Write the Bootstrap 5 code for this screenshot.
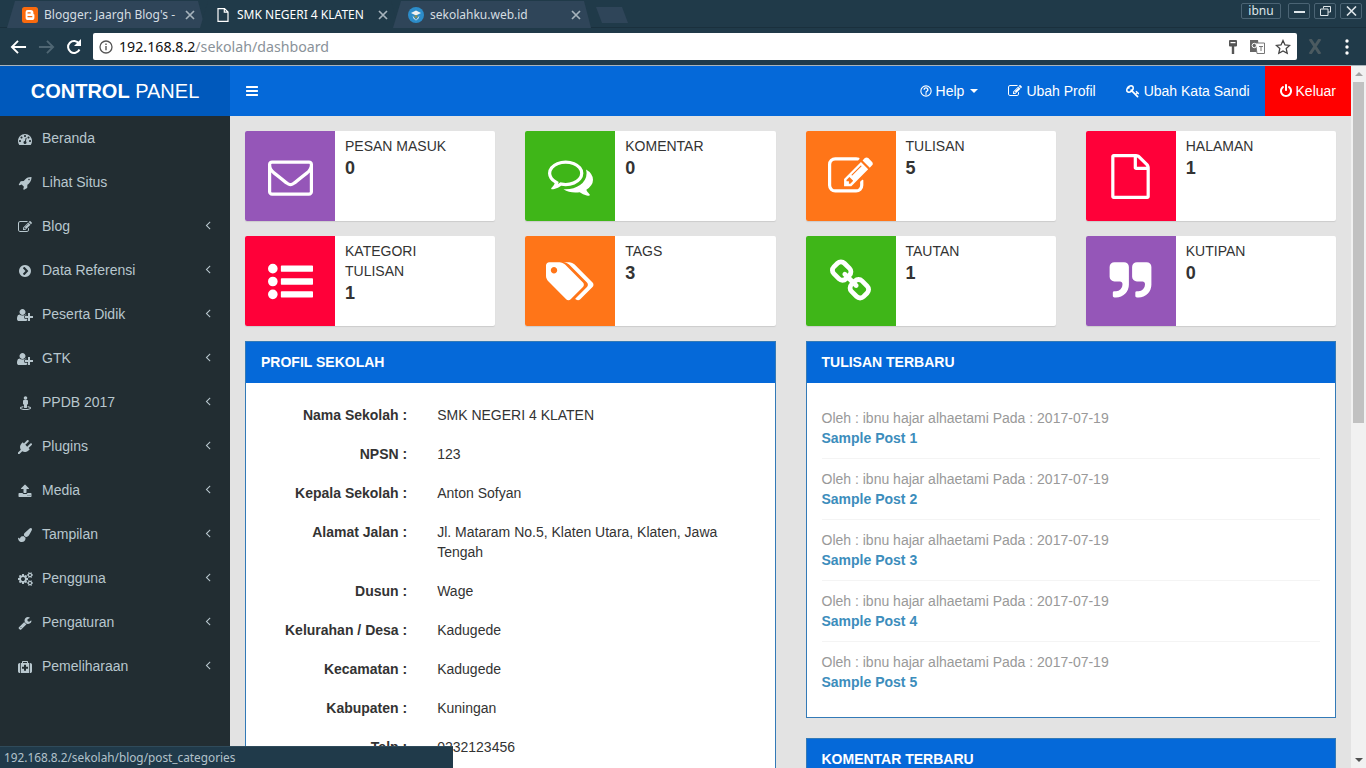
<!DOCTYPE html>
<html lang="id">
<head>
<meta charset="utf-8">
<title>SMK NEGERI 4 KLATEN</title>
<link rel="stylesheet" href="https://cdn.jsdelivr.net/npm/bootstrap@5.3.0/dist/css/bootstrap.min.css">
<style>
html,body{height:768px;overflow:hidden}
body{font-family:"Liberation Sans",Arial,sans-serif;font-size:14px;line-height:20px;color:#333;background:#e3e3e3}
svg.ic{fill:currentColor;flex:none;display:inline-block}
.shell{height:768px}
.chrome-ui{background:#203a49;font-family:"Noto Sans",sans-serif;color:#d5dde2;height:66px;flex:none;border-bottom:1px solid #a9b4bb}
.tabstrip{height:28px;padding:1px 0 0 7px;border-bottom:1px solid #1a303d}
.btab{width:198px;height:27px;margin-right:-5px;padding:0 10px 0 15px;font-size:12px;background:#2f4559;clip-path:polygon(0 100%,8px 0,191px 0,198px 100%)}
.btab.on{background:#203a49;color:#fff}
.btab .ttl{white-space:nowrap;overflow:hidden;flex:1;min-width:0;margin-left:6px}
.btab .cl{color:#a6b3bc}
.newtab{width:32px;height:16px;margin:6px 0 0 10px;background:#2f4559;clip-path:polygon(0 0,26px 0,32px 100%,6px 100%)}
.wbtn{height:16px;border:1px solid #4b6474;border-radius:2px;width:22px;color:#dfe6ea;font-size:13px;line-height:14px}
.wbtn.user{width:40px;margin-right:3px;font-size:12px}
.wctl{margin:2px 4px 0 auto;gap:4px}
.toolbar{height:37px;padding:5px 0 5px 10px;gap:11px}
.omni{height:27px;width:1204px;background:#fff;border-radius:2px;font-size:14.2px;color:#8a9299;padding:0 6px}
.omni b{font-weight:400;color:#111}
.omni .gap-i{margin-right:6px}
.omni .gap-k{margin-left:13px}
.omni .gap-s{margin-left:10px}
.dots{margin-left:12px}
.side{width:230px;background:#222d32;flex:none;color:#b8c7ce}
.brand{height:50px;background:#0059bc;color:#fff;font-size:20px;line-height:50px;text-align:center}
.smenu{padding:0;margin:0;list-style:none}
.smenu a{height:44px;padding:0 15px;color:#b8c7ce;text-decoration:none}
.smenu .slot{width:20px;margin-right:7px}
.smenu a>svg{margin-top:-2px}
.topbar{height:50px;background:#0569d9;padding:0;--bs-navbar-nav-link-padding-x:15px;flex:none}
.topbar .nav-link{color:#fff;padding:15px;font-size:14px;line-height:20px}
.topbar .nav-link.exit{background:#f00}
.caret-dn{width:0;height:0;border-left:4px solid transparent;border-right:4px solid transparent;border-top:4px solid #fff;margin-left:6px;display:inline-block;vertical-align:middle}
.canvas{padding:15px;min-height:0;background:#e3e3e3}
.grid15{--bs-gutter-x:30px;--bs-gutter-y:0}
.ibox{height:90px;margin-bottom:15px;border:0;border-radius:2px;box-shadow:0 1px 1px rgba(0,0,0,.1);overflow:hidden;flex-direction:row}
.ibox-i{width:90px;flex:none;color:#fff}
.ibox-t{padding:5px 10px;min-width:0}
.ibox-l{display:block;text-transform:uppercase;color:#333}
.ibox-n{display:block;font-weight:700;font-size:18px;line-height:24px;color:#333}
.c-pur{background:#9556b8}.c-grn{background:#3fb618}.c-org{background:#ff7518}.c-red{background:#ff0039}
.pnl{border:1px solid #337ab7;border-radius:0;margin-bottom:20px;background:#fff}
.pnl-h{height:41px;background:#0569d9;color:#fff;font-weight:700;padding:0 15px;line-height:40px;margin:0;font-size:14px;border-radius:0;border:0}
.pnl-b{padding:22px 0 0}
.frow{margin:0 0 5px;--bs-gutter-x:30px;padding-bottom:14px}
.frow .lbl{font-weight:700;text-align:right}
.plist{padding:15px 15px 15px;list-style:none;margin:0}
.plist li{padding:10px 0;border-bottom:1px solid #f4f4f4}
.plist li:last-child{border-bottom:0}
.plist span{display:block;color:#999}
.plist a{display:block;color:#3c8dbc;font-weight:700;text-decoration:none}
.sbar{width:15px;flex:none;background:#f1f1f1;padding:0 2px}
.sb-up,.sb-dn{width:0;height:0;border-left:4px solid transparent;border-right:4px solid transparent;margin:0 auto}
.sb-up{border-bottom:4px solid #a3a3a3;margin-top:6px;margin-bottom:6px}
.sb-dn{border-top:4px solid #505050;margin-top:auto;margin-bottom:6px}
.sb-th{height:341px;background:#c1c1c1;width:11px}
.statusb{position:absolute;left:0;bottom:0;width:453px;height:22px;background:#203a4a;color:#b3c2cb;font-family:"Noto Sans",sans-serif;font-size:11.8px;line-height:21px;padding-left:4px;border-top:1px solid #2f4a5a;z-index:5;white-space:nowrap}
</style>
</head>
<body>
<svg width="0" height="0" class="position-absolute" aria-hidden="true"><defs>
<symbol id="envelope" viewBox="0 0 1792 1792"><path d="M1664 1504v-768q-32 36-69 66-268 206-426 338-51 43-83 67t-86.5 48.5-102.5 24.5h-2q-48 0-102.5-24.5t-86.5-48.5-83-67q-158-132-426-338-37-30-69-66v768q0 13 9.5 22.5t22.5 9.5h1472q13 0 22.5-9.5t9.5-22.5zm0-1051v-24.5l-.5-13-3-12.5-5.5-9-9-7.5-14-2.5h-1472q-13 0-22.5 9.5t-9.5 22.5q0 168 147 284 193 152 401 317 6 5 35 29.5t46 37.5 44.5 31.5 50.5 27.5 43 9h2q20 0 43-9t50.5-27.5 44.5-31.5 46-37.5 35-29.5q208-165 401-317 54-43 100.5-115.5t46.5-131.5zm128-37v1088q0 66-47 113t-113 47h-1472q-66 0-113-47t-47-113v-1088q0-66 47-113t113-47h1472q66 0 113 47t47 113z"/></symbol>
<symbol id="comments" viewBox="0 0 1792 1792"><path d="M704 384q-153 0-286 52t-211.5 141-78.5 191q0 82 53 158t149 132l97 56-35 84q34-20 62-39l44-31 53 10q78 14 153 14 153 0 286-52t211.5-141 78.5-191-78.5-191-211.5-141-286-52zm0-128q191 0 353.5 68.5t256.5 186.5 94 257-94 257-256.5 186.5-353.5 68.5q-86 0-176-16-124 88-278 128-36 9-86 16h-3q-11 0-20.5-8t-11.5-21q-1-3-1-6.5t.5-6.5 2-6l2.5-5 3.5-5.5 4-5 4.5-5 4-4.5q5-6 23-25t26-29.5 22.5-29 25-38.5 20.5-44q-124-72-195-177t-71-224q0-139 94-257t256.5-186.5 353.5-68.5zm822 1169q10 24 20.5 44t25 38.5 22.5 29 26 29.5 23 25q1 1 4 4.5t4.5 5 4 5 3.5 5.5l2.5 5 2 6 .5 6.5-1 6.5q-3 14-13 22t-22 7q-50-7-86-16-154-40-278-128-90 16-176 16-271 0-472-132 58 4 88 4 161 0 309-45t264-129q125-92 192-212t67-254q0-77-23-152 129 71 204 178t75 230q0 120-71 224.5t-195 176.5z"/></symbol>
<symbol id="edit" viewBox="0 0 1792 1792"><path d="M888 1184l116-116-152-152-116 116v56h96v96h56zm440-720q-16-16-33 1l-350 350q-17 17-1 33t33-1l350-350q17-17 1-33zm80 594v190q0 119-84.5 203.5t-203.5 84.5h-832q-119 0-203.5-84.5t-84.5-203.5v-832q0-119 84.5-203.5t203.5-84.5h832q63 0 117 25 15 7 18 23 3 17-9 29l-49 49q-14 14-32 8-23-6-45-6h-832q-66 0-113 47t-47 113v832q0 66 47 113t113 47h832q66 0 113-47t47-113v-126q0-13 9-22l64-64q15-15 35-7t20 29zm-96-738l288 288-672 672h-288v-288zm444 132l-92 92-288-288 92-92q28-28 68-28t68 28l152 152q28 28 28 68t-28 68z"/></symbol>
<symbol id="file" viewBox="0 0 1792 1792"><path d="M1596 380q28 28 48 76t20 88v1152q0 40-28 68t-68 28h-1344q-40 0-68-28t-28-68v-1600q0-40 28-68t68-28h896q40 0 88 20t76 48zm-444-244v376h376q-10-29-22-41l-313-313q-12-12-41-22zm384 1528v-1024h-416q-40 0-68-28t-28-68v-416h-768v1536h1280z"/></symbol>
<symbol id="list" viewBox="0 0 1792 1792"><path d="M384 1408q0 80-56 136t-136 56-136-56-56-136 56-136 136-56 136 56 56 136zm0-512q0 80-56 136t-136 56-136-56-56-136 56-136 136-56 136 56 56 136zm1408 416v192q0 13-9.5 22.5t-22.5 9.5h-1216q-13 0-22.5-9.5t-9.5-22.5v-192q0-13 9.5-22.5t22.5-9.5h1216q13 0 22.5 9.5t9.5 22.5zm-1408-928q0 80-56 136t-136 56-136-56-56-136 56-136 136-56 136 56 56 136zm1408 416v192q0 13-9.5 22.5t-22.5 9.5h-1216q-13 0-22.5-9.5t-9.5-22.5v-192q0-13 9.5-22.5t22.5-9.5h1216q13 0 22.5 9.5t9.5 22.5zm0-512v192q0 13-9.5 22.5t-22.5 9.5h-1216q-13 0-22.5-9.5t-9.5-22.5v-192q0-13 9.5-22.5t22.5-9.5h1216q13 0 22.5 9.5t9.5 22.5z"/></symbol>
<symbol id="tags" viewBox="0 0 1920 1792"><path d="M448 448q0-53-37.5-90.5t-90.5-37.5-90.5 37.5-37.5 90.5 37.5 90.5 90.5 37.5 90.5-37.5 37.5-90.5zm1067 576q0 53-37 90l-491 492q-39 37-91 37-53 0-90-37l-715-716q-38-37-64.5-101t-26.5-117v-416q0-52 38-90t90-38h416q53 0 117 26.5t102 64.5l715 714q37 39 37 91zm384 0q0 53-37 90l-491 492q-39 37-91 37-36 0-59-14t-53-45l470-470q37-37 37-90 0-52-37-91l-715-714q-38-38-102-64.5t-117-26.5h224q53 0 117 26.5t102 64.5l715 714q37 39 37 91z"/></symbol>
<symbol id="chain" viewBox="0 0 1792 1792"><path d="M1520 1216q0-40-28-68l-208-208q-28-28-68-28-42 0-72 32 3 3 19 18.5t21.5 21.5 15 19 13 25.5 3.5 27.5q0 40-28 68t-68 28q-15 0-27.5-3.5t-25.5-13-19-15-21.5-21.5-18.5-19q-33 31-33 73 0 40 28 68l206 207q27 27 68 27 40 0 68-26l147-146q28-28 28-67zm-703-705q0-40-28-68l-206-207q-28-28-68-28-39 0-68 27l-147 146q-28 28-28 67 0 40 28 68l208 208q27 27 68 27 42 0 72-31-3-3-19-18.5t-21.5-21.5-15-19-13-25.5-3.5-27.5q0-40 28-68t68-28q15 0 27.5 3.5t25.5 13 19 15 21.5 21.5 18.5 19q33-31 33-73zm895 705q0 120-85 203l-147 146q-83 83-203 83-121 0-204-85l-206-207q-83-83-83-203 0-123 88-209l-88-88q-86 88-208 88-120 0-204-84l-208-208q-84-84-84-204t85-203l147-146q83-83 203-83 121 0 204 85l206 207q83 83 83 203 0 123-88 209l88 88q86-88 208-88 120 0 204 84l208 208q84 84 84 204z"/></symbol>
<symbol id="quote" viewBox="0 0 1792 1792"><path d="M832 320v704q0 104-40.5 198.5t-109.5 163.5-163.5 109.5-198.5 40.5h-64q-26 0-45-19t-19-45v-128q0-26 19-45t45-19h64q106 0 181-75t75-181v-32q0-40-28-68t-68-28h-224q-80 0-136-56t-56-136v-384q0-80 56-136t136-56h384q80 0 136 56t56 136zm896 0v704q0 104-40.5 198.5t-109.5 163.5-163.5 109.5-198.5 40.5h-64q-26 0-45-19t-19-45v-128q0-26 19-45t45-19h64q106 0 181-75t75-181v-32q0-40-28-68t-68-28h-224q-80 0-136-56t-56-136v-384q0-80 56-136t136-56h384q80 0 136 56t56 136z"/></symbol>
<symbol id="bars" viewBox="0 0 1792 1792"><path d="M1664 1344v128q0 26-19 45t-45 19h-1408q-26 0-45-19t-19-45v-128q0-26 19-45t45-19h1408q26 0 45 19t19 45zm0-512v128q0 26-19 45t-45 19h-1408q-26 0-45-19t-19-45v-128q0-26 19-45t45-19h1408q26 0 45 19t19 45zm0-512v128q0 26-19 45t-45 19h-1408q-26 0-45-19t-19-45v-128q0-26 19-45t45-19h1408q26 0 45 19t19 45z"/></symbol>
<symbol id="key" viewBox="0 0 1792 1792"><path d="M832 512q0-80-56-136t-136-56-136 56-56 136q0 42 19 83-41-19-83-19-80 0-136 56t-56 136 56 136 136 56 136-56 56-136q0-42-19-83 41 19 83 19 80 0 136-56t56-136zm851 704q0 17-49 66t-66 49q-9 0-28.5-16t-36.5-33-38.5-40-24.5-26l-96 96 220 220q28 28 28 68 0 42-39 81t-81 39q-40 0-68-28l-671-671q-176 131-365 131-163 0-265.5-102.5t-102.5-265.5q0-160 95-313t248-248 313-95q163 0 265.5 102.5t102.5 265.5q0 189-131 365l355 355 96-96q-3-3-26-24.5t-40-38.5-33-36.5-16-28.5q0-17 49-66t66-49q13 0 23 10 6 6 46 44.5t82 79.5 86.5 86 73 78 28.5 41z"/></symbol>
<symbol id="gauge" viewBox="0 0 1792 1792"><path d="M384 1152q0-53-37.5-90.5t-90.5-37.5-90.5 37.5-37.5 90.5 37.5 90.5 90.5 37.5 90.5-37.5 37.5-90.5zm192-448q0-53-37.5-90.5t-90.5-37.5-90.5 37.5-37.5 90.5 37.5 90.5 90.5 37.5 90.5-37.5 37.5-90.5zm428 481l101-382q6-26-7.5-48.5t-38.5-29.5-48 6.5-30 39.5l-101 382q-60 5-107 43.5t-63 98.5q-20 77 20 146t117 89 146-20 89-117q16-60-6-117t-72-91zm660-33q0-53-37.5-90.5t-90.5-37.5-90.5 37.5-37.5 90.5 37.5 90.5 90.5 37.5 90.5-37.5 37.5-90.5zm-640-640q0-53-37.5-90.5t-90.5-37.5-90.5 37.5-37.5 90.5 37.5 90.5 90.5 37.5 90.5-37.5 37.5-90.5zm448 192q0-53-37.5-90.5t-90.5-37.5-90.5 37.5-37.5 90.5 37.5 90.5 90.5 37.5 90.5-37.5 37.5-90.5zm320 448q0 261-141 483-19 29-54 29h-1402q-35 0-54-29-141-221-141-483 0-182 71-348t191-286 286-191 348-71 348 71 286 191 191 286 71 348z"/></symbol>
<symbol id="rocket" viewBox="0 0 1792 1792"><path d="M1504 448q0-40-28-68t-68-28-68 28-28 68 28 68 68 28 68-28 28-68zm224-288q0 249-75.5 430.5t-253.5 360.5q-81 80-195 176l-20 379q-2 16-16 26l-384 224q-7 4-16 4-12 0-23-9l-64-64q-13-14-8-32l85-276-281-281-276 85q-3 1-9 1-14 0-23-9l-64-64q-17-19-5-39l224-384q10-14 26-16l379-20q96-114 176-195 188-187 358-258t431-71q14 0 24 9.5t10 22.5z"/></symbol>
<symbol id="chev" viewBox="0 0 1792 1792"><path d="M845 1395l454-454q19-19 19-45t-19-45l-454-454q-19-19-45-19t-45 19l-102 102q-19 19-19 45t19 45l307 307-307 307q-19 19-19 45t19 45l102 102q19 19 45 19t45-19zm819-499q0 209-103 385.5t-279.5 279.5-385.5 103-385.5-103-279.5-279.5-103-385.5 103-385.5 279.5-279.5 385.5-103 385.5 103 279.5 279.5 103 385.5z"/></symbol>
<symbol id="userplus" viewBox="0 0 2048 1792"><path d="M704 896q-159 0-271.5-112.5t-112.5-271.5 112.5-271.5 271.5-112.5 271.5 112.5 112.5 271.5-112.5 271.5-271.5 112.5zm960 128h352q13 0 22.5 9.5t9.5 22.5v192q0 13-9.5 22.5t-22.5 9.5h-352v352q0 13-9.5 22.5t-22.5 9.5h-192q-13 0-22.5-9.5t-9.5-22.5v-352h-352q-13 0-22.5-9.5t-9.5-22.5v-192q0-13 9.5-22.5t22.5-9.5h352v-352q0-13 9.5-22.5t22.5-9.5h192q13 0 22.5 9.5t9.5 22.5v352zm-736 224q0 52 38 90t90 38h256v238q-68 50-171 50h-874q-121 0-194-69t-73-190q0-53 3.5-103.5t14-109 26.5-108.5 43-97.5 62-81 85.5-53.5 111.5-20q19 0 39 17 79 61 154.5 91.5t164.5 30.5 164.5-30.5 154.5-91.5q20-17 39-17 132 0 217 96h-223q-52 0-90 38t-38 90v192z"/></symbol>
<symbol id="street" viewBox="0 0 1408 1792"><path d="M1408 1536q0 63-61.5 113.5t-164 81-225 46-253.5 15.5-253.5-15.5-225-46-164-81-61.5-113.5q0-49 33-88.5t91-66.5 118-44.5 131-29.5q26-5 48 10.5t26 41.5q5 26-10.5 48t-41.5 26q-58 10-106 23.5t-76.5 25.5-48.5 23.5-27.5 19.5-8.5 12q3 11 27 26.5t73 33 114 32.5 160.5 25 201.5 10 201.5-10 160.5-25 114-33 73-33 27-27q-1-4-8.5-11t-27.5-19-48.5-23.5-76.5-25-106-23.5q-26-4-41.5-26t-10.5-48q4-26 26-41.5t48-10.5q71 12 131 29.5t118 44.5 91 66.5 33 88.5zm-384-896v384q0 26-19 45t-45 19h-64v384q0 26-19 45t-45 19h-256q-26 0-45-19t-19-45v-384h-64q-26 0-45-19t-19-45v-384q0-53 37.5-90.5t90.5-37.5h384q53 0 90.5 37.5t37.5 90.5zm-96-384q0 93-65.5 158.5t-158.5 65.5-158.5-65.5-65.5-158.5 65.5-158.5 158.5-65.5 158.5 65.5 65.5 158.5z"/></symbol>
<symbol id="plug" viewBox="0 0 1792 1792"><path d="M1755 453q37 38 37 90.5t-37 90.5l-401 400 150 150-160 160q-163 163-389.5 186.5t-411.5-100.5l-362 362h-181v-181l362-362q-124-185-100.5-411.5t186.5-389.5l160-160 150 150 400-401q38-37 91-37t90 37 37 90.5-37 90.5l-400 401 234 234 401-400q38-37 91-37t90 37z"/></symbol>
<symbol id="upload" viewBox="0 0 1792 1792"><path d="M1344 1472q0-26-19-45t-45-19-45 19-19 45 19 45 45 19 45-19 19-45zm256 0q0-26-19-45t-45-19-45 19-19 45 19 45 45 19 45-19 19-45zm128-224v320q0 40-28 68t-68 28h-1472q-40 0-68-28t-28-68v-320q0-40 28-68t68-28h427q21 56 70.5 92t110.5 36h256q61 0 110.5-36t70.5-92h427q40 0 68 28t28 68zm-325-648q-17 40-59 40h-256v448q0 26-19 45t-45 19h-256q-26 0-45-19t-19-45v-448h-256q-42 0-59-40-17-39 14-69l448-448q18-19 45-19t45 19l448 448q31 30 14 69z"/></symbol>
<symbol id="brush" viewBox="0 0 1792 1792"><path d="M1615 0q70 0 122.5 46.5t52.5 116.5q0 63-45 151-332 629-465 752-97 91-218 91-126 0-216.5-92.5t-90.5-219.5q0-128 92-212l638-579q59-54 130-54zm-909 1034q39 76 106.5 130t150.5 76l1 71q4 213-129.5 347t-348.5 134q-123 0-218-46.5t-152.5-127.5-86.5-183-29-220q7 5 41 30t62 44.5 59 36.5 46 17q41 0 55-37 25-66 57.5-112.5t69.5-76 88-47.5 103-25.5 125-10.5z"/></symbol>
<symbol id="cogs" viewBox="0 0 1920 1792"><path d="M896 896q0-106-75-181t-181-75-181 75-75 181 75 181 181 75 181-75 75-181zm768 512q0-52-38-90t-90-38-90 38-38 90q0 53 37.5 90.5t90.5 37.5 90.5-37.5 37.5-90.5zm0-1024q0-52-38-90t-90-38-90 38-38 90q0 53 37.5 90.5t90.5 37.5 90.5-37.5 37.5-90.5zm-384 421v185q0 10-7 19.5t-16 10.5l-155 24q-11 35-32 76 34 48 90 115 7 11 7 20 0 12-7 19-23 30-82.5 89.5t-78.5 59.5q-11 0-21-7l-115-90q-37 19-77 31-11 108-23 155-7 24-30 24h-186q-11 0-20-7.5t-10-17.5l-23-153q-34-10-75-31l-118 89q-7 7-20 7-11 0-21-8-144-133-144-160 0-9 7-19 10-14 41-53t47-61q-23-44-35-82l-152-24q-10-1-17-9.5t-7-19.5v-185q0-10 7-19.5t16-10.5l155-24q11-35 32-76-34-48-90-115-7-11-7-20 0-12 7-20 22-30 82-89t79-59q11 0 21 7l115 90q34-18 77-32 11-108 23-154 7-24 30-24h186q11 0 20 7.5t10 17.5l23 153q34 10 75 31l118-89q8-7 20-7 11 0 21 8 144 133 144 160 0 8-7 19-12 16-42 54t-45 60q23 48 34 82l152 23q10 2 17 10.5t7 19.5zm640 533v140q0 16-149 31-12 27-30 52 51 113 51 138 0 4-4 7-122 71-124 71-8 0-46-47t-52-68q-20 2-30 2t-30-2q-14 21-52 68t-46 47q-2 0-124-71-4-3-4-7 0-25 51-138-18-25-30-52-149-15-149-31v-140q0-16 149-31 13-29 30-52-51-113-51-138 0-4 4-7 4-2 35-20t59-34 30-16q8 0 46 46.5t52 67.5q20-2 30-2t30 2q51-71 92-112l6-2q4 0 124 70 4 3 4 7 0 25-51 138 17 23 30 52 149 15 149 31zm0-1024v140q0 16-149 31-12 27-30 52 51 113 51 138 0 4-4 7-122 71-124 71-8 0-46-47t-52-68q-20 2-30 2t-30-2q-14 21-52 68t-46 47q-2 0-124-71-4-3-4-7 0-25 51-138-18-25-30-52-149-15-149-31v-140q0-16 149-31 13-29 30-52-51-113-51-138 0-4 4-7 4-2 35-20t59-34 30-16q8 0 46 46.5t52 67.5q20-2 30-2t30 2q51-71 92-112l6-2q4 0 124 70 4 3 4 7 0 25-51 138 17 23 30 52 149 15 149 31z"/></symbol>
<symbol id="wrench" viewBox="0 0 1792 1792"><path d="M448 1472q0-26-19-45t-45-19-45 19-19 45 19 45 45 19 45-19 19-45zm644-420l-682 682q-37 37-90 37-52 0-91-37l-106-108q-38-36-38-90 0-53 38-91l681-681q39 98 114.5 173.5t173.5 114.5zm634-435q0 39-23 106-47 134-164.5 217.5t-258.5 83.5q-185 0-316.5-131.5t-131.5-316.5 131.5-316.5 316.5-131.5q58 0 121.5 16.5t107.5 46.5q16 11 16 28t-16 28l-293 169v224l193 107q5-3 79-48.5t135.5-81 70.5-35.5q15 0 23.5 10t8.5 25z"/></symbol>
<symbol id="medkit" viewBox="0 0 1792 1792"><path d="M1280 1088v-192q0-14-9-23t-23-9h-224v-224q0-14-9-23t-23-9h-192q-14 0-23 9t-9 23v224h-224q-14 0-23 9t-9 23v192q0 14 9 23t23 9h224v224q0 14 9 23t23 9h192q14 0 23-9t9-23v-224h224q14 0 23-9t9-23zm-640-704h512v-128h-512v128zm-384 0v1280h-32q-92 0-158-66t-66-158v-832q0-92 66-158t158-66h32zm1184 0v1280h-1088v-1280h160v-160q0-40 28-68t68-28h576q40 0 68 28t28 68v160h160zm352 224v832q0 92-66 158t-158 66h-32v-1280h32q92 0 158 66t66 158z"/></symbol>
<symbol id="angle" viewBox="0 0 1792 1792"><path d="M1203 544q0 13-10 23l-393 393 393 393q10 10 10 23t-10 23l-50 50q-10 10-23 10t-23-10l-466-466q-10-10-10-23t10-23l466-466q10-10 23-10t23 10l50 50q10 10 10 23z"/></symbol>
</defs></svg>

<div class="shell d-flex flex-column position-relative">
  <header class="chrome-ui">
    <div class="tabstrip d-flex">
      <div class="btab d-flex align-items-center">
        <svg width="16" height="16" viewBox="0 0 16 16" class="ic"><rect width="16" height="16" rx="2.5" fill="#f96a0e"/><path fill="#fff" d="M5.5 3h3.3A2.6 2.6 0 0 1 11.4 5.6V6.6a1 1 0 0 0 1 1v2.8A2.6 2.6 0 0 1 9.8 13H6.2a2.6 2.6 0 0 1-2.6-2.6V5A2 2 0 0 1 5.5 3z"/><rect x="5.4" y="5.3" width="3.4" height="1.3" rx=".6" fill="#f96a0e"/><rect x="5.4" y="9" width="5" height="1.3" rx=".6" fill="#f96a0e"/></svg>
        <span class="ttl">Blogger: Jaargh Blog's -</span>
        <svg class="ic cl" width="10" height="10" viewBox="0 0 10 10"><path fill="none" stroke="currentColor" stroke-width="1.7" d="M1 1l8 8M9 1l-8 8"/></svg>
      </div>
      <div class="btab on d-flex align-items-center">
        <svg width="16" height="16" viewBox="0 0 16 16" class="ic"><path fill="none" stroke="#fff" stroke-width="1.2" d="M3 1.6h6.5L13 5v9.4H3zM9.3 1.6V5.2H13"/></svg>
        <span class="ttl">SMK NEGERI 4 KLATEN</span>
        <svg class="ic cl" width="10" height="10" viewBox="0 0 10 10"><path fill="none" stroke="currentColor" stroke-width="1.7" d="M1 1l8 8M9 1l-8 8"/></svg>
      </div>
      <div class="btab d-flex align-items-center">
        <svg width="16" height="16" viewBox="0 0 16 16" class="ic"><circle cx="8" cy="8" r="8" fill="#2c8cc9"/><path d="M3 6l5-2.5L13 6l-5 2.5z" fill="#f2f2f2"/><path d="M4.5 8.5l3.5 4.5 3.5-4.5-1 3-2.5 2-2.5-2z" fill="#e9e9e9"/><circle cx="8" cy="9.5" r="1.5" fill="#8a8f55"/></svg>
        <span class="ttl">sekolahku.web.id</span>
        <svg class="ic cl" width="10" height="10" viewBox="0 0 10 10"><path fill="none" stroke="currentColor" stroke-width="1.7" d="M1 1l8 8M9 1l-8 8"/></svg>
      </div>
      <div class="newtab"></div>
      <div class="wctl d-flex">
        <div class="wbtn user text-center">ibnu</div>
        <div class="wbtn d-flex align-items-center justify-content-center"><svg width="11" height="3" viewBox="0 0 11 3" class="ic"><rect width="11" height="2" y="1"/></svg></div>
        <div class="wbtn d-flex align-items-center justify-content-center"><svg width="11" height="10" viewBox="0 0 11 10" class="ic"><path fill="none" stroke="currentColor" d="M3.5 2.5V.5h7v5.5h-2.5M.5 3h7.5v6.500H.5z"/></svg></div>
        <div class="wbtn d-flex align-items-center justify-content-center"><svg width="11" height="10" viewBox="0 0 11 10" class="ic"><path fill="none" stroke="currentColor" stroke-width="1.6" d="M1 .5l9 9M10 .5l-9 9"/></svg></div>
      </div>
    </div>
    <div class="toolbar d-flex align-items-center">
      <svg width="17" height="16" viewBox="0 0 18 16" class="ic"><path fill="none" stroke="#fff" stroke-width="2" d="M17 8H2M8.5 1.5L2 8l6.5 6.5"/></svg>
      <svg width="17" height="16" viewBox="0 0 18 16" class="ic"><path fill="none" stroke="#4f6673" stroke-width="2" d="M1 8h15M9.5 1.5L16 8l-6.5 6.5"/></svg>
      <svg width="16" height="16" viewBox="0 0 16 16" class="ic"><path fill="none" stroke="#fff" stroke-width="2" d="M13.5 10.5A6 6 0 1 1 13 4.5"/><path fill="#fff" d="M15 0v7H8z"/></svg>
      <div class="omni d-flex align-items-center">
        <svg width="14" height="14" viewBox="0 0 14 14" class="ic gap-i"><circle cx="7" cy="7" r="6" fill="none" stroke="#555" stroke-width="1.3"/><path d="M6.3 6h1.4v4.3H6.300zM6.3 3.5h1.4v1.4H6.300z" fill="#555"/></svg>
        <span><b>192.168.8.2</b>/sekolah/dashboard</span>
        <svg width="8" height="14" viewBox="0 0 8 14" class="ic ms-auto"><path fill="#555" d="M1 0h6a1 1 0 0 1 1 1v4.5a1 1 0 0 1-1 1H5.200V14H2.800V6.500H1a1 1 0 0 1-1-1V1a1 1 0 0 1 1-1z"/><rect x="1.5" y="2" width="5" height="1.2" fill="#fff"/></svg>
        <svg width="15" height="14" viewBox="0 0 15 14" class="ic gap-k"><path fill="#666" d="M0 0h8l1.5 12H0z"/><path fill="#fff" stroke="#777" d="M5.5 3h9v10.5H7z"/><circle cx="4.3" cy="5.5" r="2.2" fill="none" stroke="#fff"/><path d="M9 6.5h4M11 6v5" stroke="#777" fill="none"/></svg>
        <svg width="16" height="16" viewBox="0 0 16 16" class="ic gap-s"><path fill="none" stroke="#444" stroke-width="1.3" d="M8 1.500l2 4.400 4.700.5-3.500 3.200 1 4.700L8 11.900l-4.200 2.400 1-4.700L1.300 6.400 6 5.900z"/></svg>
      </div>
      <svg width="14" height="15" viewBox="0 0 14 15" class="ic"><path fill="none" stroke="#4b5a60" stroke-width="3" d="M2 0l10 15M12 0L2 15"/></svg>
      <svg width="4" height="16" viewBox="0 0 4 16" class="ic dots"><g fill="#fff"><circle cx="2" cy="2" r="1.7"/><circle cx="2" cy="8" r="1.7"/><circle cx="2" cy="14" r="1.7"/></g></svg>
    </div>
  </header>

  <div class="d-flex flex-grow-1 overflow-hidden">
    <aside class="side">
      <div class="brand"><b>CONTROL</b> PANEL</div>
      <ul class="smenu">
        <li><a href="#" class="d-flex align-items-center"><span class="slot text-center"><svg class="ic" height="14" width="14"><use href="#gauge"/></svg></span>Beranda</a></li>
        <li><a href="#" class="d-flex align-items-center"><span class="slot text-center"><svg class="ic" height="14" width="14"><use href="#rocket"/></svg></span>Lihat Situs</a></li>
        <li><a href="#" class="d-flex align-items-center"><span class="slot text-center"><svg class="ic" height="14" width="14"><use href="#edit"/></svg></span>Blog<svg class="ic ms-auto" height="14" width="14"><use href="#angle"/></svg></a></li>
        <li><a href="#" class="d-flex align-items-center"><span class="slot text-center"><svg class="ic" height="14" width="14"><use href="#chev"/></svg></span>Data Referensi<svg class="ic ms-auto" height="14" width="14"><use href="#angle"/></svg></a></li>
        <li><a href="#" class="d-flex align-items-center"><span class="slot text-center"><svg class="ic" height="14" width="16"><use href="#userplus"/></svg></span>Peserta Didik<svg class="ic ms-auto" height="14" width="14"><use href="#angle"/></svg></a></li>
        <li><a href="#" class="d-flex align-items-center"><span class="slot text-center"><svg class="ic" height="14" width="16"><use href="#userplus"/></svg></span>GTK<svg class="ic ms-auto" height="14" width="14"><use href="#angle"/></svg></a></li>
        <li><a href="#" class="d-flex align-items-center"><span class="slot text-center"><svg class="ic" height="14" width="11"><use href="#street"/></svg></span>PPDB 2017<svg class="ic ms-auto" height="14" width="14"><use href="#angle"/></svg></a></li>
        <li><a href="#" class="d-flex align-items-center"><span class="slot text-center"><svg class="ic" height="14" width="14"><use href="#plug"/></svg></span>Plugins<svg class="ic ms-auto" height="14" width="14"><use href="#angle"/></svg></a></li>
        <li><a href="#" class="d-flex align-items-center"><span class="slot text-center"><svg class="ic" height="14" width="14"><use href="#upload"/></svg></span>Media<svg class="ic ms-auto" height="14" width="14"><use href="#angle"/></svg></a></li>
        <li><a href="#" class="d-flex align-items-center"><span class="slot text-center"><svg class="ic" height="14" width="14"><use href="#brush"/></svg></span>Tampilan<svg class="ic ms-auto" height="14" width="14"><use href="#angle"/></svg></a></li>
        <li><a href="#" class="d-flex align-items-center"><span class="slot text-center"><svg class="ic" height="14" width="15"><use href="#cogs"/></svg></span>Pengguna<svg class="ic ms-auto" height="14" width="14"><use href="#angle"/></svg></a></li>
        <li><a href="#" class="d-flex align-items-center"><span class="slot text-center"><svg class="ic" height="14" width="14"><use href="#wrench"/></svg></span>Pengaturan<svg class="ic ms-auto" height="14" width="14"><use href="#angle"/></svg></a></li>
        <li><a href="#" class="d-flex align-items-center"><span class="slot text-center"><svg class="ic" height="14" width="14"><use href="#medkit"/></svg></span>Pemeliharaan<svg class="ic ms-auto" height="14" width="14"><use href="#angle"/></svg></a></li>
      </ul>
    </aside>

    <div class="flex-grow-1 d-flex flex-column overflow-hidden">
      <nav class="navbar navbar-expand topbar">
        <a href="#" class="nav-link d-flex align-items-center"><svg class="ic" height="14" width="14"><use href="#bars"/></svg></a>
        <ul class="navbar-nav ms-auto flex-row">
          <li class="nav-item"><a href="#" class="nav-link d-flex align-items-center"><svg class="ic me-1" width="12" height="12" viewBox="0 0 14 14"><circle cx="7" cy="7" r="6" fill="none" stroke="#fff" stroke-width="1.3"/><path fill="none" stroke="#fff" stroke-width="1.6" d="M4.8 5.5A2.2 2.1 0 1 1 7.8 7.4C7.1 7.7 7 8 7 8.9"/><rect x="6.2" y="9.7" width="1.6" height="1.6" fill="#fff"/></svg>Help<span class="caret-dn"></span></a></li>
          <li class="nav-item"><a href="#" class="nav-link d-flex align-items-center"><svg class="ic me-1" height="14" width="14"><use href="#edit"/></svg>Ubah Profil</a></li>
          <li class="nav-item"><a href="#" class="nav-link d-flex align-items-center"><svg class="ic me-1" height="14" width="14"><use href="#key"/></svg>Ubah Kata Sandi</a></li>
          <li class="nav-item"><a href="#" class="nav-link exit d-flex align-items-center"><svg class="ic me-1" height="14" width="12" viewBox="128 0 1536 1792"><path d="M1664 896q0 156-61 298t-164 245-245 164-298 61-298-61-245-164-164-245-61-298q0-182 80.5-343t226.5-270q43-32 95.5-25t83.5 50q32 42 24.5 94.5t-49.5 84.5q-98 74-151.5 181t-53.5 228q0 104 40.5 198.5t109.5 163.5 163.5 109.5 198.5 40.5 198.5-40.5 163.5-109.5 109.5-163.5 40.5-198.5q0-121-53.5-228t-151.5-181q-42-32-49.5-84.5t24.5-94.5q31-43 84-50t95 25q146 109 226.5 270t80.5 343zm-640-768v640q0 52-38 90t-90 38-90-38-38-90v-640q0-52 38-90t90-38 90 38 38 90z"/></svg>Keluar</a></li>
        </ul>
      </nav>

      <main class="canvas flex-grow-1 overflow-hidden">
        <div class="row grid15">
          <div class="col-3"><div class="card ibox"><div class="ibox-i c-pur d-flex align-items-center justify-content-center"><svg class="ic" width="45" height="45"><use href="#envelope"/></svg></div><div class="ibox-t"><span class="ibox-l">Pesan Masuk</span><span class="ibox-n">0</span></div></div></div>
          <div class="col-3"><div class="card ibox"><div class="ibox-i c-grn d-flex align-items-center justify-content-center"><svg class="ic" width="45" height="45"><use href="#comments"/></svg></div><div class="ibox-t"><span class="ibox-l">Komentar</span><span class="ibox-n">0</span></div></div></div>
          <div class="col-3"><div class="card ibox"><div class="ibox-i c-org d-flex align-items-center justify-content-center"><svg class="ic" width="45" height="45"><use href="#edit"/></svg></div><div class="ibox-t"><span class="ibox-l">Tulisan</span><span class="ibox-n">5</span></div></div></div>
          <div class="col-3"><div class="card ibox"><div class="ibox-i c-red d-flex align-items-center justify-content-center"><svg class="ic" width="45" height="45"><use href="#file"/></svg></div><div class="ibox-t"><span class="ibox-l">Halaman</span><span class="ibox-n">1</span></div></div></div>
          <div class="col-3"><div class="card ibox"><div class="ibox-i c-red d-flex align-items-center justify-content-center"><svg class="ic" width="45" height="45"><use href="#list"/></svg></div><div class="ibox-t"><span class="ibox-l">Kategori<br>Tulisan</span><span class="ibox-n">1</span></div></div></div>
          <div class="col-3"><div class="card ibox"><div class="ibox-i c-org d-flex align-items-center justify-content-center"><svg class="ic" width="48" height="45"><use href="#tags"/></svg></div><div class="ibox-t"><span class="ibox-l">Tags</span><span class="ibox-n">3</span></div></div></div>
          <div class="col-3"><div class="card ibox"><div class="ibox-i c-grn d-flex align-items-center justify-content-center"><svg class="ic" width="45" height="45"><use href="#chain"/></svg></div><div class="ibox-t"><span class="ibox-l">Tautan</span><span class="ibox-n">1</span></div></div></div>
          <div class="col-3"><div class="card ibox"><div class="ibox-i c-pur d-flex align-items-center justify-content-center"><svg class="ic" width="45" height="45"><use href="#quote"/></svg></div><div class="ibox-t"><span class="ibox-l">Kutipan</span><span class="ibox-n">0</span></div></div></div>
        </div>
        <div class="row grid15">
          <div class="col-6">
            <section class="pnl">
              <h3 class="pnl-h">PROFIL SEKOLAH</h3>
              <div class="pnl-b">
                <div class="row frow"><div class="col-4 lbl">Nama Sekolah :</div><div class="col-8">SMK NEGERI 4 KLATEN</div></div>
                <div class="row frow"><div class="col-4 lbl">NPSN :</div><div class="col-8">123</div></div>
                <div class="row frow"><div class="col-4 lbl">Kepala Sekolah :</div><div class="col-8">Anton Sofyan</div></div>
                <div class="row frow"><div class="col-4 lbl">Alamat Jalan :</div><div class="col-8">Jl. Mataram No.5, Klaten Utara, Klaten, Jawa Tengah</div></div>
                <div class="row frow"><div class="col-4 lbl">Dusun :</div><div class="col-8">Wage</div></div>
                <div class="row frow"><div class="col-4 lbl">Kelurahan / Desa :</div><div class="col-8">Kadugede</div></div>
                <div class="row frow"><div class="col-4 lbl">Kecamatan :</div><div class="col-8">Kadugede</div></div>
                <div class="row frow"><div class="col-4 lbl">Kabupaten :</div><div class="col-8">Kuningan</div></div>
                <div class="row frow"><div class="col-4 lbl">Telp :</div><div class="col-8">0232123456</div></div>
              </div>
            </section>
          </div>
          <div class="col-6">
            <section class="pnl">
              <h3 class="pnl-h">TULISAN TERBARU</h3>
              <ul class="plist">
                <li><span>Oleh : ibnu hajar alhaetami Pada : 2017-07-19</span><a href="#">Sample Post 1</a></li>
                <li><span>Oleh : ibnu hajar alhaetami Pada : 2017-07-19</span><a href="#">Sample Post 2</a></li>
                <li><span>Oleh : ibnu hajar alhaetami Pada : 2017-07-19</span><a href="#">Sample Post 3</a></li>
                <li><span>Oleh : ibnu hajar alhaetami Pada : 2017-07-19</span><a href="#">Sample Post 4</a></li>
                <li><span>Oleh : ibnu hajar alhaetami Pada : 2017-07-19</span><a href="#">Sample Post 5</a></li>
              </ul>
            </section>
            <section class="pnl">
              <h3 class="pnl-h">KOMENTAR TERBARU</h3>
            </section>
          </div>
        </div>
      </main>
    </div>

    <div class="sbar d-flex flex-column">
      <div class="sb-up"></div>
      <div class="sb-th"></div>
      <div class="sb-dn"></div>
    </div>
  </div>
  <div class="statusb">192.168.8.2/sekolah/blog/post_categories</div>
</div>
<script src="https://cdn.jsdelivr.net/npm/bootstrap@5.3.0/dist/js/bootstrap.bundle.min.js"></script>
</body>
</html>
